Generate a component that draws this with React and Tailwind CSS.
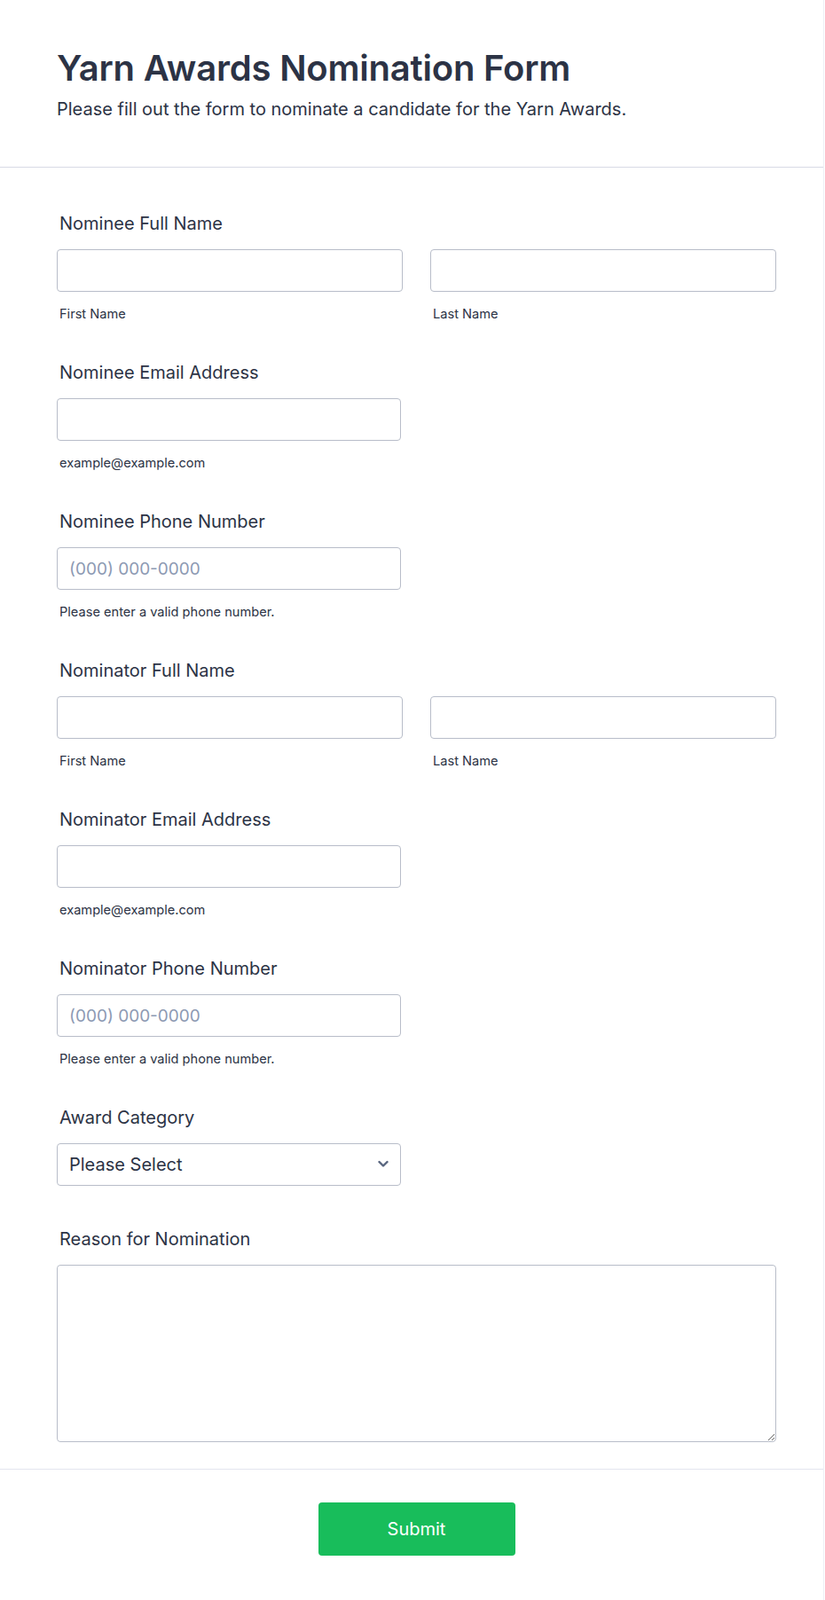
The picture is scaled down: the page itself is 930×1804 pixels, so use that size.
import React from "react";

const font = { fontFamily: "Inter, 'Noto Sans', sans-serif" };

function Label({ children }) {
  return (
    <div className="h-[28px] pl-[3px] text-[20px] leading-[28px] font-normal text-[#2c3345]">
      {children}
    </div>
  );
}

function Sub({ children }) {
  return (
    <div className="mt-[15px] h-[20px] pl-[3px] text-[14.6px] leading-[20px] text-[#2c3345]">
      {children}
    </div>
  );
}

function Input({ placeholder, className = "" }) {
  return (
    <input
      type="text"
      placeholder={placeholder}
      className={
        "block mt-[15px] h-[48px] rounded-[4px] border border-[#b8bdc9] bg-white px-[13px] text-[19px] text-[#2c3345] placeholder:text-[#8d9ab3] outline-none " +
        className
      }
      style={font}
    />
  );
}

function NameField({ label }) {
  return (
    <div className="mb-[42px]">
      <Label>{label}</Label>
      <div className="flex gap-[31px]">
        <div className="w-[390px]">
          <Input className="w-[390px]" />
          <Sub>First Name</Sub>
        </div>
        <div className="w-[390px]">
          <Input className="w-[390px]" />
          <Sub>Last Name</Sub>
        </div>
      </div>
    </div>
  );
}

function SingleField({ label, sub, placeholder }) {
  return (
    <div className="mb-[42px]">
      <Label>{label}</Label>
      <Input className="w-[388px]" placeholder={placeholder} />
      <Sub>{sub}</Sub>
    </div>
  );
}

export default function App() {
  return (
    <div className="w-[929px] min-h-[1804px] border-r border-[#eef0f6] bg-white" style={font}>
      <header className="border-b border-[#d8dae5] px-[64px] pt-[53px] pb-[51px]">
        <h1 className="h-[48px] text-[40px] leading-[48px] font-semibold text-[#2c3345] tracking-[-0.2px]">
          Yarn Awards Nomination Form
        </h1>
        <p className="mt-[8px] h-[28px] text-[20px] leading-[28px] text-[#2c3345]">
          Please fill out the form to nominate a candidate for the Yarn Awards.
        </p>
      </header>

      <main className="pl-[64px] pr-[54px] pt-[49px]">
        <NameField label="Nominee Full Name" />
        <SingleField label="Nominee Email Address" sub="example@example.com" />
        <SingleField
          label="Nominee Phone Number"
          sub="Please enter a valid phone number."
          placeholder="(000) 000-0000"
        />
        <NameField label="Nominator Full Name" />
        <SingleField label="Nominator Email Address" sub="example@example.com" />
        <SingleField
          label="Nominator Phone Number"
          sub="Please enter a valid phone number."
          placeholder="(000) 000-0000"
        />

        <div className="mt-[6px] mb-[46px]">
          <Label>Award Category</Label>
          <div className="relative mt-[15px] w-[388px]">
            <select
              className="block h-[48px] w-[388px] appearance-none rounded-[4px] border border-[#b8bdc9] bg-white px-[13px] text-[20px] text-[#2c3345] outline-none"
              style={font}
              defaultValue=""
            >
              <option value="">Please Select</option>
              <option>Best Yarn Dyer</option>
              <option>Best Pattern Designer</option>
            </select>
            <svg
              className="pointer-events-none absolute right-[14px] top-[19px]"
              width="12"
              height="9"
              viewBox="0 0 12 9"
            >
              <polyline
                points="1.5,2 6,6.5 10.5,2"
                fill="none"
                stroke="#57647e"
                strokeWidth="2.4"
                strokeLinecap="round"
                strokeLinejoin="round"
              />
            </svg>
          </div>
        </div>

        <div>
          <Label>Reason for Nomination</Label>
          <textarea
            className="mt-[15px] block h-[200px] w-[811px] rounded-[4px] border border-[#b8bdc9] bg-white px-[13px] py-[10px] text-[18px] text-[#2c3345] outline-none"
            style={font}
          />
        </div>
      </main>

      <footer className="mt-[30px] border-t border-[#e3e5ee] pt-[37px] pb-[46px]">
        <div className="flex w-[875px] justify-center pl-[64px]">
          <button
            className="h-[60px] w-[222px] rounded-[4px] bg-[#18bd5b] text-[20px] text-white"
            style={font}
          >
            Submit
          </button>
        </div>
      </footer>
    </div>
  );
}
